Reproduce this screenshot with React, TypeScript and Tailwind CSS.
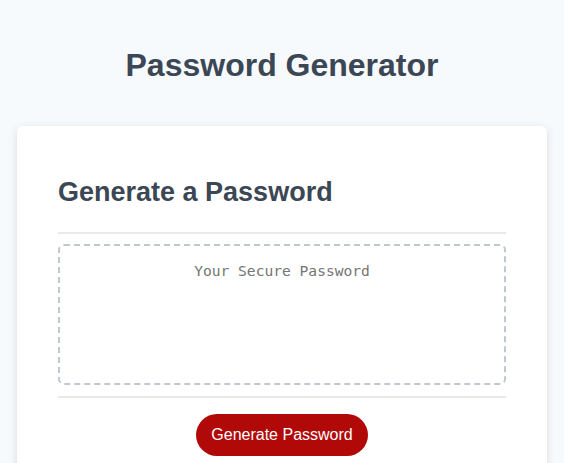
export default function App() {
  return (
    <div className="min-h-screen bg-[#f7fafd] px-[17px] pt-[47px] font-['Liberation_Sans',Arial,sans-serif] text-[#3b4754]">
      {/* Page header */}
      <h1 className="text-center text-[32px] font-bold leading-[37px]">Password Generator</h1>

      {/* Card */}
      <div className="mt-[42px] rounded-[6px] bg-white px-[41px] pt-[51px] pb-[30px] shadow-[0_2px_8px_rgba(0,0,0,0.12)]">
        <h2 className="text-[27px] font-bold leading-[31px]">Generate a Password</h2>
        <div className="mt-[24px] h-[2px] bg-[#e7e9eb]" />

        <div className="mt-[10px] h-[141px] rounded-[6px] border-2 border-dashed border-[#c0c7cf] pt-[16px] text-center font-['DejaVu_Sans_Mono',monospace] text-[14.6px] leading-[18px] text-[#757575]">
          Your Secure Password
        </div>

        <div className="mt-[11px] h-[2px] bg-[#e7e9eb]" />
        <div className="flex justify-center pt-[16px]">
          <button className="h-[42px] rounded-full bg-[#b10808] px-[15px] text-[16px] text-white">
            Generate Password
          </button>
        </div>
      </div>
    </div>
  );
}
